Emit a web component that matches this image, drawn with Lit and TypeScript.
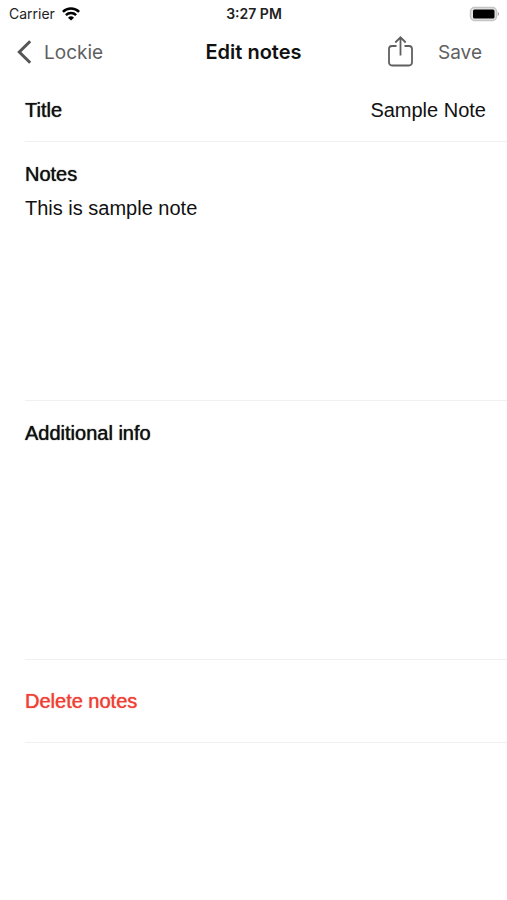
import { LitElement, html, css } from "lit";
import { customElement, state } from "lit/decorators.js";

@customElement("status-bar")
class StatusBar extends LitElement {
  static styles = css`
    :host {
      display: grid;
      grid-template-columns: 1fr auto 1fr;
      align-items: center;
      height: 27px;
      padding: 0 8px 0 9px;
      box-sizing: border-box;
      font-size: 14px;
      color: #222;
    }
    .carrier {
      display: flex;
      align-items: center;
      gap: 7px;
    }
    .time {
      font-weight: 600;
    }
    .battery {
      justify-self: end;
    }
    svg {
      display: block;
    }
  `;

  render() {
    return html`
      <span class="carrier">
        Carrier
        <svg width="18" height="14" viewBox="0 0 18 14" fill="none" stroke="#000" stroke-width="2.5" aria-hidden="true">
          <path d="M0.9 4.9a11.5 11.5 0 0 1 16.2 0" />
          <path d="M3.9 8.1a7.2 7.2 0 0 1 10.2 0" />
          <path d="M9 13.6 6 10.7a4.3 4.3 0 0 1 6 0z" fill="#000" stroke="none" />
        </svg>
      </span>
      <span class="time">3:27 PM</span>
      <svg class="battery" width="30" height="16" viewBox="0 0 30 16" aria-hidden="true">
        <rect x="1.500" y="1.500" width="26" height="13" rx="4" fill="#e4e4e4" stroke="#c4c4c4" stroke-width="1.500" />
        <rect x="4" y="3.500" width="21.500" height="9" rx="1.500" fill="#000" />
        <path d="M28.800 5.800a2.600 2.600 0 0 1 0 4.400z" fill="#aaa" />
      </svg>
    `;
  }
}

@customElement("nav-bar")
class NavBar extends LitElement {
  static styles = css`
    :host {
      display: grid;
      grid-template-columns: 1fr auto 1fr;
      align-items: center;
      height: 50px;
      padding: 0 25px 0 17px;
      box-sizing: border-box;
      font-size: 19px;
    }
    button {
      display: flex;
      align-items: center;
      gap: 12px;
      margin: 0;
      padding: 0;
      border: 0;
      background: none;
      color: #5f5f5f;
      font: inherit;
      cursor: pointer;
    }
    h1 {
      margin: 0 0 0 8px;
      font-size: 20px;
      font-weight: 600;
      color: #111;
    }
    .actions {
      display: flex;
      align-items: center;
      justify-content: flex-end;
      gap: 25px;
    }
    svg {
      display: block;
    }
  `;

  render() {
    return html`
      <button type="button">
        <svg width="15" height="24" viewBox="0 0 15 24" fill="none" stroke="#555" stroke-width="3" aria-hidden="true">
          <path d="M13.2 1.2 2.3 12l10.9 10.8" />
        </svg>
        Lockie
      </button>
      <h1>Edit notes</h1>
      <div class="actions">
        <button type="button" aria-label="Share">
          <svg width="25" height="32" viewBox="0 0 25 32" fill="none" stroke="#5f5f5f" stroke-width="1.8" aria-hidden="true">
            <path d="M8.5 10H4a3 3 0 0 0-3 3v13.500a3 3 0 0 0 3 3h17a3 3 0 0 0 3-3V13a3 3 0 0 0-3-3h-4.500" />
            <path d="M12.500 19.500V1.500M7.300 6.500l5.200-5.200 5.200 5.200" />
          </svg>
        </button>
        <button type="button">Save</button>
      </div>
    `;
  }
}

@customElement("app-root")
class AppRoot extends LitElement {
  static styles = css`
    :host {
      display: block;
      min-height: 100vh;
      background: #fff;
      font-family: Inter, "Liberation Sans", sans-serif;
    }
    form {
      margin-left: 25px;
      font-family: "Liberation Sans", Arial, sans-serif;
      font-size: 20px;
      line-height: 24px;
      color: #111;
    }
    .row {
      display: flex;
      border-bottom: 1px solid #f0f0f0;
    }
    .title {
      align-items: center;
      height: 62px;
      padding: 2px 21px 0 0;
    }
    .area {
      flex-direction: column;
      gap: 10px;
      height: 238px;
      padding: 20px 21px 0 0;
    }
    .delete {
      align-items: center;
      height: 82px;
    }
    label,
    .delete button {
      text-shadow: 0 0 1px currentColor;
    }
    input,
    textarea,
    .delete button {
      margin: 0;
      padding: 0;
      border: 0;
      outline: 0;
      background: none;
      color: inherit;
      font: inherit;
    }
    input {
      flex: 1;
      min-width: 0;
      text-align: right;
    }
    textarea {
      flex: 1;
      resize: none;
    }
    .delete button {
      color: #ee4037;
      cursor: pointer;
    }
  `;

  @state() heading = "Sample Note";
  @state() notes = "This is sample note";
  @state() info = "";

  render() {
    return html`
      <status-bar></status-bar>
      <nav-bar></nav-bar>
      <form>
        <div class="row title">
          <label for="title">Title</label>
          <input id="title" type="text" .value=${this.heading} />
        </div>
        <div class="row area">
          <label for="notes">Notes</label>
          <textarea id="notes" .value=${this.notes}></textarea>
        </div>
        <div class="row area">
          <label for="info">Additional info</label>
          <textarea id="info" .value=${this.info}></textarea>
        </div>
        <div class="row delete">
          <button type="button">Delete notes</button>
        </div>
      </form>
    `;
  }
}
